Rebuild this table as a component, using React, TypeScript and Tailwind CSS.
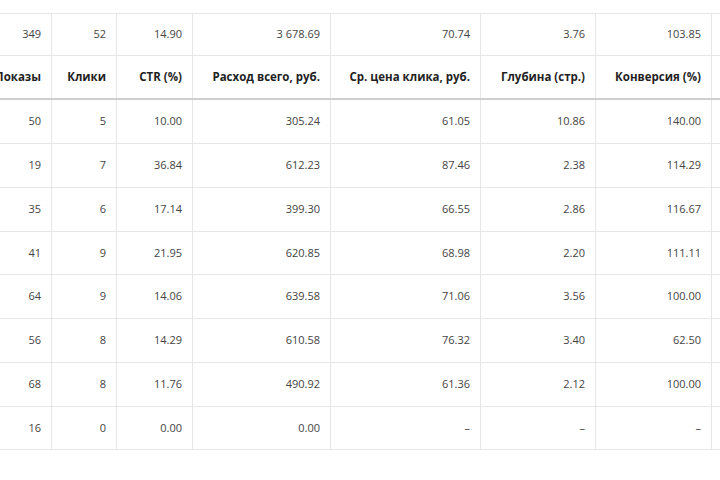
import React from 'react';

type Row = string[];

const COLS = [70, 65, 76, 138, 150, 115, 116, 80];

const SUMMARY: Row = ['349', '52', '14.90', '3 678.69', '70.74', '3.76', '103.85', ''];
const HEADERS: Row = ['Показы', 'Клики', 'CTR (%)', 'Расход всего, руб.', 'Ср. цена клика, руб.', 'Глубина (стр.)', 'Конверсия (%)', ''];

const DATA: { h: string; cells: Row }[] = [
  { h: 'h-[44px]', cells: ['50', '5', '10.00', '305.24', '61.05', '10.86', '140.00', ''] },
  { h: 'h-[44px]', cells: ['19', '7', '36.84', '612.23', '87.46', '2.38', '114.29', ''] },
  { h: 'h-[44px]', cells: ['35', '6', '17.14', '399.30', '66.55', '2.86', '116.67', ''] },
  { h: 'h-[43px]', cells: ['41', '9', '21.95', '620.85', '68.98', '2.20', '111.11', ''] },
  { h: 'h-[44px]', cells: ['64', '9', '14.06', '639.58', '71.06', '3.56', '100.00', ''] },
  { h: 'h-[44px]', cells: ['56', '8', '14.29', '610.58', '76.32', '3.40', '62.50', ''] },
  { h: 'h-[44px]', cells: ['68', '8', '11.76', '490.92', '61.36', '2.12', '100.00', ''] },
  { h: 'h-[43px]', cells: ['16', '0', '0.00', '0.00', '–', '–', '–', ''] },
];

const Cells: React.FC<{ cells: Row; bold?: boolean }> = ({ cells, bold }) => (
  <>
    {cells.map((c, i) => (
      <div
        key={i}
        style={{ width: COLS[i] }}
        className={`shrink-0 h-full flex items-center justify-end pr-[10px] whitespace-nowrap ${
          i < cells.length - 1 ? 'border-r border-[#e6e6e6]' : ''
        } ${bold ? 'font-bold text-[11.5px] text-[#1f1f1f]' : 'text-[#444]'}`}
      >
        {c}
      </div>
    ))}
  </>
);

export default function App() {
  return (
    <div className="w-[720px] h-[480px] overflow-hidden bg-white font-['Open_Sans',sans-serif] text-[11px]">
      <div className="pt-[13px] ml-[-18px] w-[810px]">
        <div className="h-[43px] flex border-t border-b border-[#e6e6e6]">
          <Cells cells={SUMMARY} />
        </div>
        <div className="h-[44px] flex border-b-2 border-[#cfcfcf]">
          <Cells cells={HEADERS} bold />
        </div>
        {DATA.map((r, i) => (
          <div key={i} className={`${r.h} flex border-b border-[#e6e6e6]`}>
            <Cells cells={r.cells} />
          </div>
        ))}
      </div>
    </div>
  );
}
